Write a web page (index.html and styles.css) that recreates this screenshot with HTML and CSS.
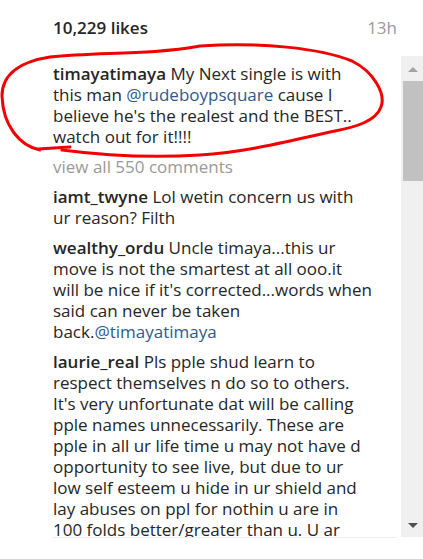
FILE: index.html
```html
<!DOCTYPE html>
<html lang="en">
<head>
  <meta charset="UTF-8" />
  <title>Comments</title>
  <link rel="stylesheet" href="styles.css">
</head>
<body>
  <div class="post-meta">
    <span class="likes">10,229 likes</span>
    <span class="time">13h</span>
  </div>

  <div class="panel">
    <ul class="comments">
      <li class="comment">
        <a class="user">timayatimaya</a> My Next single is with<br>
        this man <a class="mention">@rudeboypsquare</a> cause I<br>
        believe he's the realest and the BEST..<br>
        watch out for it!!!!
      </li>
      <li class="view-all">view all 550 comments</li>
      <li class="comment">
        <a class="user">iamt_twyne</a> Lol wetin concern us with<br>
        ur reason? Filth
      </li>
      <li class="comment">
        <a class="user">wealthy_ordu</a> Uncle timaya...this ur<br>
        move is not the smartest at all ooo.it<br>
        will be nice if it's corrected...words when<br>
        said can never be taken<br>
        back.<a class="mention">@timayatimaya</a>
      </li>
      <li class="comment">
        <a class="user">laurie_real</a> Pls pple shud learn to<br>
        respect themselves n do so to others.<br>
        It's very unfortunate dat will be calling<br>
        pple names unnecessarily. These are<br>
        pple in all ur life time u may not have d<br>
        opportunity to see live, but due to ur<br>
        low self esteem u hide in ur shield and<br>
        lay abuses on ppl for nothin u are in<br>
        100 folds better/greater than u. U ar
      </li>
    </ul>

    <div class="scrollbar">
      <span class="arrow up"></span>
      <span class="thumb"></span>
      <span class="arrow down"></span>
    </div>
  </div>

  <!-- hand drawn red circle round the first comment -->
  <svg class="scribble" width="423" height="200" viewBox="0 0 423 200">
    <path d="M40,150 C20,146 3,126 2,96 C2,72 24,61 50,57 C100,52 150,55 200,46 C260,42 320,48 352,61 C374,72 386,94 381,107 C376,121 356,127 335,131 C300,138 250,152 200,155 C150,158 100,155 62,150 M38,149 L70,147"
      fill="none" stroke="#f20000" stroke-width="3" stroke-linecap="round" stroke-linejoin="round"/>
  </svg>
</body>
</html>
```

FILE: styles.css
```css
* {
  margin: 0;
  padding: 0;
  box-sizing: border-box;
}

body {
  font-family: 'Open Sans', 'Noto Sans', sans-serif;
  font-size: 17px;
  color: #262626;
  background: #fff;
  width: 423px;
  height: 559px;
  overflow: hidden;
  position: relative;
}

.post-meta {
  display: flex;
  justify-content: space-between;
  align-items: flex-start;
  width: 397px;
  padding: 17px 0 0 53px;
  height: 56px;
  line-height: 21px;
}

.likes {
  font-weight: 600;
}

.time {
  color: #999;
}

.panel {
  display: flex;
  height: 482px;
}

.comments {
  list-style: none;
  width: 345px;
  margin-left: 52px;
  padding: 7px 0 0 1px;
  height: 482px;
  overflow: hidden;
  border-bottom: 1px solid #efefef;
  line-height: 21px;
  white-space: nowrap;
  display: flex;
  flex-direction: column;
  gap: 9px;
}

.comment a {
  text-decoration: none;
}

.user {
  font-weight: 600;
  color: #262626;
}

.mention {
  color: #2e5a8a;
}

.view-all {
  color: #999;
}

.scrollbar {
  margin-left: 4px;
  width: 22px;
  height: 481px;
  background: #f0f0f0;
  display: flex;
  flex-direction: column;
  align-items: flex-end;
}

.thumb {
  display: block;
  width: 20px;
  height: 100px;
  background: #c1c1c1;
}

.arrow {
  display: block;
  width: 0;
  height: 0;
  margin: 11px 5px 9px 0;
  border-left: 5px solid transparent;
  border-right: 5px solid transparent;
}

.arrow.up {
  border-bottom: 5px solid #a3a3a3;
}

.arrow.down {
  margin-top: auto;
  margin-bottom: 9px;
  border-top: 5px solid #505050;
}

.scribble {
  position: absolute;
  top: 0;
  left: 0;
}
```
